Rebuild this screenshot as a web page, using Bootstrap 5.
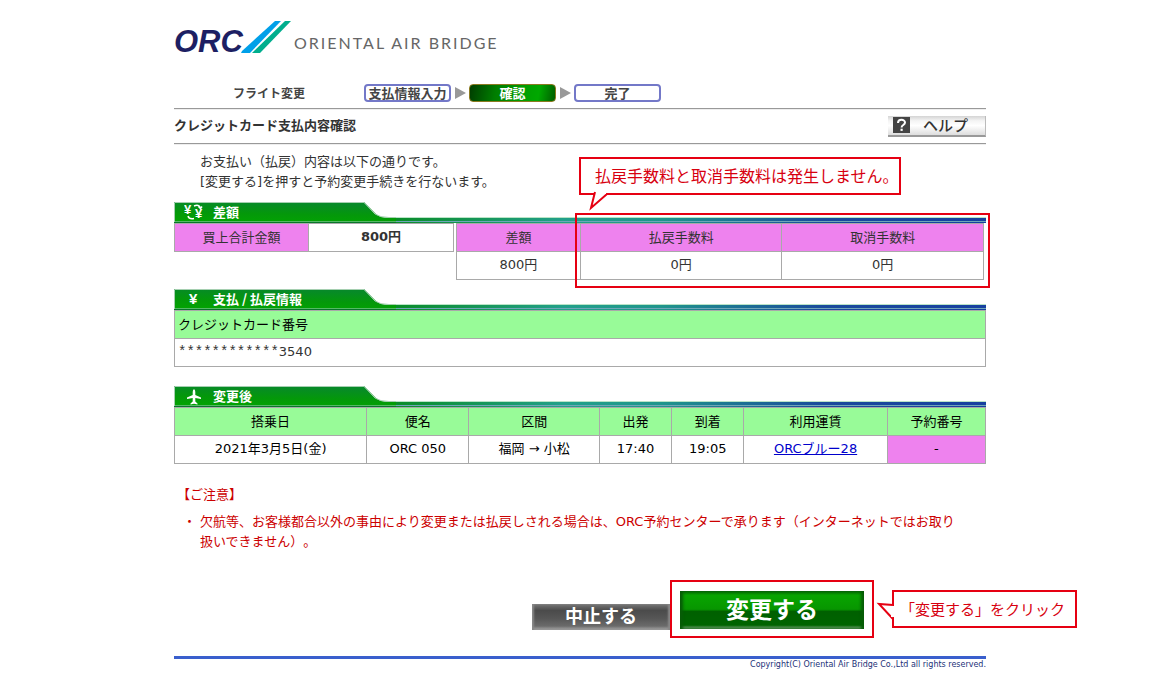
<!DOCTYPE html>
<html lang="ja">
<head>
<meta charset="utf-8">
<meta name="viewport" content="width=device-width, initial-scale=1">
<title>クレジットカード支払内容確認 | ORC</title>
<link href="https://cdn.jsdelivr.net/npm/bootstrap@5.3.0/dist/css/bootstrap.min.css" rel="stylesheet">
<style>
  :root { --jp: "Noto Sans CJK JP", sans-serif; --red: #e60012; --line: #a9a9a9; }
  body { font-family: "DejaVu Sans", var(--jp); font-size: 13px; line-height: 20px; color: #333; background: #fff; text-spacing-trim: space-all; }
  .page { max-width: 812px; }
  .brand-row { padding-top: 20px; margin-bottom: 30px; }
  .brand-logo { height: 34px; overflow: visible; }

  /* progress steps */
  .steps { padding: 0 0 6px 59px; font: 700 12px/18px var(--jp); color: #444; }
  .steps ol { margin-left: 59px; }
  .step { width: 87px; height: 18px; border: 2px solid #7378c8; border-radius: 4px; font-size: 13px; line-height: 13px; text-align: center; background: #fff; }
  .step.current { color: #fff; border: 1px solid #8a7a20; line-height: 15px; background: linear-gradient(100deg, #003d00, #007d00 30%, #009c00 60%, #00a800 80%, #005c00); }
  .arrow { width: 18px; height: 18px; }

  .title-bar { height: 36px; border-top: 1px solid #999; border-bottom: 1px solid #999; box-shadow: 0 1px #eee, inset 0 1px #eee; }
  .title-bar h1 { font-size: 13px; line-height: 20px; font-weight: 700; }
  .help { width: 98px; height: 21px; border: 0; border-bottom: 2px solid #999; border-right: 1px solid #bbb; background: linear-gradient(#d4d4d4, #f4f4f4 25%, #fff 50%, #ddd); font: 500 15px/18px var(--jp); color: #333; }
  .help svg { margin: 0 13px 0 5px; }
  .intro { padding: 8px 0 10px 26px; }

  /* section headings */
  .section-head { height: 21px; padding-left: 10px; font: 700 13px/20px var(--jp); color: #fff; background: linear-gradient(90deg, #078a1e 25%, #22a08a 48%, #1f958c 60%, #1a4a9c 80%, #1740a0) 0 16px / 100% 5px no-repeat; }
  .section-head .edge { left: 0; right: 0; top: 15px; height: 5px; border-top: 1px solid #b9e4c6; border-bottom: 1px solid #6fa6b8; }
  .section-head .tab-shape { left: 0; top: 0; }
  .section-head h2 { font: inherit; }
  .glyph { width: 20px; height: 20px; margin-right: 9px; }
  .payment { margin-top: 9px; }
  .changed { margin-top: 19px; }

  .grid { table-layout: fixed; width: 100%; color: #333; }
  .grid th, .grid td { height: 28px; padding: 0 3px; border: 1px solid var(--line); text-align: center; font-weight: 400; }
  .grid td { padding-bottom: 2px; }
  .grid .pink { background: #ee82ee; }
  .grid .mint, .grid .mint th { background: #98fb98; color: #000; }
  .masked { font: 14px/20px "Liberation Mono", monospace; }
  .total { flex: 0 0 280px; }
  .total .grid th { width: 48%; }
  .fees { flex: 1 1 0; margin: 0 2px 0 2px; }
  .fees th:first-child { width: 23.5%; }
  .itinerary td { color: #000; }
  .c-date { width: 23.7%; } .c-no { width: 12.6%; } .c-route { width: 16.1%; }
  .c-time { width: 8.9%; } .c-fare { width: 17.7%; }
  .itinerary a { color: #0000cc; }

  .notice { color: #c00; padding: 21px 24px 0 3px; }
  .notice p { margin-bottom: 7px; }
  .notice li { padding-left: 23px; text-indent: -17px; }
  .notice .dot { display: inline-block; width: 17px; text-indent: 0; }

  /* red annotations */
  .frame { border: 2px solid var(--red); }
  .frame-fees { left: 119px; right: -6px; top: -10px; bottom: -8px; pointer-events: none; }
  .callout { border: 2px solid var(--red); background: #fff; color: #d7000f; height: 38px; font: 400 16px/33px var(--jp); white-space: nowrap; }
  .callout svg { overflow: visible; }
  .callout-fees { left: 405px; top: 13px; width: 322px; padding-left: 14px; z-index: 2; }
  .callout-fees svg { left: 9px; top: 32px; }
  .callout-click { left: 220px; top: 8px; width: 185px; font-size: 15px; padding-left: 6px; }
  .callout-click svg { left: -18px; top: 6px; }

  .actions { margin-right: 112px; margin-top: 28px; }
  .actions button { border: 0; color: #fff; font-family: var(--jp); font-weight: 700; padding: 0 0 4px; }
  .cancel { width: 138px; height: 26px; margin-bottom: 8px; font-size: 18px; line-height: 22px; background: linear-gradient(#777, #4b4b4b 25%, #565656 55%, #6b6b6b 85%, #aaa); box-shadow: inset 2px 0 2px #888, inset -2px 0 2px #888; }
  .primary-frame { padding: 9px 8px 7px; }
  .change { width: 184px; height: 38px; font-size: 23px; line-height: 34px; background: linear-gradient(#067006, #08a400 12%, #079600 48%, #006000 54%, #006400 90%, #93b593); box-shadow: inset 3px 0 3px #075c07, inset -3px 0 3px #075c07; }

  .site-footer { margin-top: 18px; border-top: 3px solid #3a5fcd; font-size: 8px; line-height: 12px; color: #1c3278; }
</style>
</head>
<body>
<div class="page container-fluid p-0">
  <header>
    <div class="brand-row d-flex">
      <svg class="brand-logo" width="340" height="34" viewBox="0 0 340 34" role="img" aria-label="ORC Oriental Air Bridge">
        <path d="M101 1H107L76 33H67L68 31Z" fill="#00a0e9"/>
        <path d="M111 1H117L86 33H78Z" fill="#00ae8e"/>
        <text x="0" y="32" font-family="Liberation Sans" font-size="31" font-style="italic" font-weight="700" fill="#1d1f63">ORC</text>
        <text x="120" y="29" font-family="Lato" font-size="16" letter-spacing="2" fill="#666">ORIENTAL AIR BRIDGE</text>
      </svg>
    </div>
    <nav class="steps d-flex align-items-center" aria-label="手続きの流れ">
      <span>フライト変更</span>
      <ol class="list-unstyled d-flex mb-0">
        <li class="step">支払情報入力</li>
        <li class="arrow"><svg class="d-block" width="18" height="18"><path d="M4 3L15 9L4 15Z" fill="#999"/></svg></li>
        <li class="step current" aria-current="step">確認</li>
        <li class="arrow"><svg class="d-block" width="18" height="18"><path d="M4 3L15 9L4 15Z" fill="#999"/></svg></li>
        <li class="step">完了</li>
      </ol>
    </nav>
  </header>

  <main>
    <div class="title-bar d-flex justify-content-between align-items-center">
      <h1 class="m-0">クレジットカード支払内容確認</h1>
      <button type="button" class="help d-flex align-items-center p-0">
        <svg width="17" height="16" viewBox="0 0 17 16" aria-hidden="true"><rect width="17" height="16" fill="#444"/><path d="M5 6C5 1.8 12 1.8 12 5.6C12 8 8.6 8 8.6 10.4" fill="none" stroke="#fff" stroke-width="2"/><rect x="7.5" y="11.7" width="2.2" height="2.2" fill="#fff"/></svg>ヘルプ
      </button>
    </div>

    <div class="intro position-relative">
      <p class="m-0">お支払い（払戻）内容は以下の通りです。<br>[変更する]を押すと予約変更手続きを行ないます。</p>
      <div class="callout callout-fees position-absolute">払戻手数料と取消手数料は発生しません。
        <svg class="position-absolute" width="22" height="18" aria-hidden="true"><path d="M5 1L1 17L17 3" fill="#fff" stroke="#e60012" stroke-width="2"/><path d="M6 1H16" stroke="#fff" stroke-width="4"/></svg>
      </div>
    </div>

    <section>
      <div class="section-head position-relative">
        <span class="edge position-absolute"></span>
        <svg class="tab-shape position-absolute" width="222" height="21" aria-hidden="true">
          <defs><linearGradient id="tabFill" x1="0" y1="1" x2="0.2" y2="0"><stop offset="0" stop-color="#02a500"/><stop offset=".5" stop-color="#04980a"/><stop offset="1" stop-color="#078a28"/></linearGradient></defs>
          <g id="tab"><path d="M0 0H190L202 12Q206 16 215 16H222V21H0Z" fill="url(#tabFill)"/><path d="M.5 20V.5H190L201 12Q206 15.5 215 15.5H222" fill="none" stroke="#a5cfb0"/><path d="M1 19.500H222" stroke="#55b965"/><path d="M0 20.500H222" stroke="#08762a"/></g>
        </svg>
        <div class="position-relative d-flex align-items-center">
          <svg class="glyph" viewBox="0 0 20 20" aria-hidden="true"><g fill="#fff" font-family="Liberation Sans" font-weight="700" font-size="13"><text x="0" y="12">¥</text><text x="11" y="16">¥</text></g><path d="M10 4Q15 2 16.500 6M14.500 4.500L16.500 6.500L18 4.500M4 14Q5 17.500 10 16.500" fill="none" stroke="#fff" stroke-width="1.500"/></svg>
          <h2 class="m-0">差額</h2>
        </div>
      </div>
      <div class="d-flex align-items-start">
        <div class="total">
          <table class="grid"><tbody><tr><th scope="row" class="pink">買上合計金額</th><td class="fw-bold">800円</td></tr></tbody></table>
        </div>
        <div class="fees position-relative">
          <table class="grid">
            <thead><tr class="pink"><th scope="col">差額</th><th scope="col">払戻手数料</th><th scope="col">取消手数料</th></tr></thead>
            <tbody><tr><td>800円</td><td>0円</td><td>0円</td></tr></tbody>
          </table>
          <div class="frame frame-fees position-absolute"></div>
        </div>
      </div>
    </section>

    <section class="payment">
      <div class="section-head position-relative">
        <span class="edge position-absolute"></span>
        <svg class="tab-shape position-absolute" width="222" height="21" aria-hidden="true"><use href="#tab"/></svg>
        <div class="position-relative d-flex align-items-center">
          <svg class="glyph" viewBox="0 0 20 20" aria-hidden="true"><text x="5" y="15" fill="#fff" font-family="Liberation Sans" font-weight="700" font-size="15">¥</text></svg>
          <h2 class="m-0">支払 / 払戻情報</h2>
        </div>
      </div>
      <table class="grid">
        <thead><tr class="mint"><th scope="col" class="text-start">クレジットカード番号</th></tr></thead>
        <tbody><tr><td class="text-start"><span class="masked">************</span>3540</td></tr></tbody>
      </table>
    </section>

    <section class="changed">
      <div class="section-head position-relative">
        <span class="edge position-absolute"></span>
        <svg class="tab-shape position-absolute" width="222" height="21" aria-hidden="true"><use href="#tab"/></svg>
        <div class="position-relative d-flex align-items-center">
          <svg class="glyph" viewBox="0 0 20 20" aria-hidden="true"><path d="M10 3Q11.300 4 11.300 6V9L17 11.500V13L11.300 12V15.500L13.500 17.500V18.500L10 17.800L6.500 18.500V17.500L8.700 15.500V12L3 13V11.500L8.700 9V6Q8.700 4 10 3Z" fill="#fff"/></svg>
          <h2 class="m-0">変更後</h2>
        </div>
      </div>
      <table class="grid itinerary">
        <thead><tr class="mint">
          <th scope="col" class="c-date">搭乗日</th><th scope="col" class="c-no">便名</th><th scope="col" class="c-route">区間</th><th scope="col" class="c-time">出発</th><th scope="col" class="c-time">到着</th><th scope="col" class="c-fare">利用運賃</th><th scope="col">予約番号</th>
        </tr></thead>
        <tbody><tr>
          <td>2021年3月5日(金)</td><td>ORC 050</td><td>福岡 → 小松</td><td>17:40</td><td>19:05</td><td><a href="#">ORCブルー28</a></td><td class="pink">-</td>
        </tr></tbody>
      </table>
    </section>

    <section class="notice">
      <p>【ご注意】</p>
      <ul class="list-unstyled m-0">
        <li><span class="dot">・</span>欠航等、お客様都合以外の事由により変更または払戻しされる場合は、ORC予約センターで承ります（インターネットではお取り扱いできません）。</li>
      </ul>
    </section>

    <div class="actions d-flex justify-content-end align-items-end">
      <button type="button" class="cancel">中止する</button>
      <div class="frame primary-frame position-relative">
        <button type="submit" class="change d-block">変更する</button>
        <div class="callout callout-click position-absolute">「変更する」をクリック
          <svg class="position-absolute" width="20" height="24" aria-hidden="true"><path d="M17 7L3 6L17 21" fill="#fff" stroke="#e60012" stroke-width="2"/><path d="M17 8V19" stroke="#fff" stroke-width="4"/></svg>
        </div>
      </div>
    </div>
  </main>

  <footer class="site-footer text-end">Copyright(C) Oriental Air Bridge Co.,Ltd all rights reserved.</footer>
</div>
<script src="https://cdn.jsdelivr.net/npm/bootstrap@5.3.0/dist/js/bootstrap.bundle.min.js"></script>
</body>
</html>
